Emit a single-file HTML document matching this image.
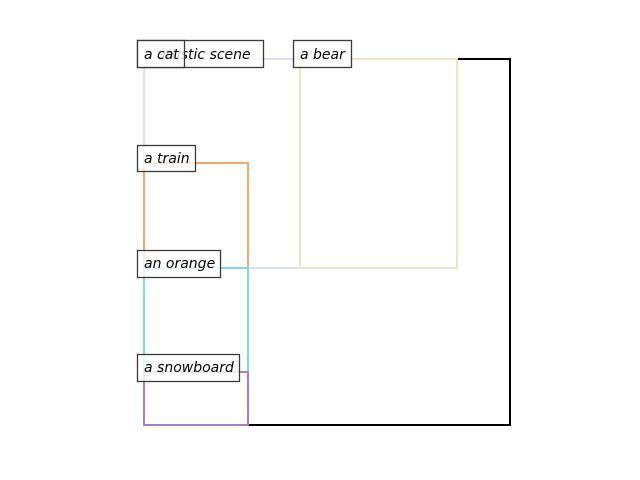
<!DOCTYPE html>
<html><head><style>
html,body{margin:0;padding:0;background:#fff;width:640px;height:480px;overflow:hidden}
svg text{font-family:"DejaVu Sans","Liberation Sans",sans-serif;font-style:italic;font-size:14px;fill:#000}
</style></head><body>
<svg width="640" height="480" xmlns="http://www.w3.org/2000/svg">
<g fill="none" stroke-width="2" shape-rendering="crispEdges">
<rect x="144" y="59" width="366" height="366" stroke="#000"/>
<rect x="144" y="59" width="156" height="209" stroke="#d8def6"/>
<rect x="300" y="59" width="157" height="209" stroke="#f2e4c2"/>
<rect x="144" y="163" width="104" height="105" stroke="#f0a868"/>
<rect x="144" y="268" width="104" height="157" stroke="#80d8f0"/>
<rect x="144" y="372" width="104" height="53" stroke="#ac7cc0"/>
</g>
<g stroke="#3a3a3a" stroke-width="1.3" fill="rgba(255,255,255,0.8)">
<rect x="137.5" y="40.5" width="126" height="27"/>
<text x="144" y="59" stroke="none">a artistic scene</text>
<rect x="137.5" y="40.5" width="47" height="27"/>
<text x="144" y="59" stroke="none">a cat</text>
<rect x="293.5" y="40.5" width="58" height="27"/>
<text x="300" y="59" stroke="none">a bear</text>
<rect x="137.5" y="145.5" width="58" height="26"/>
<text x="144" y="163" stroke="none">a train</text>
<rect x="137.5" y="250.5" width="83" height="27"/>
<text x="144" y="268" stroke="none">an orange</text>
<rect x="137.5" y="354.5" width="102" height="27"/>
<text x="144" y="372" stroke="none">a snowboard</text>
</g>
</svg>
</body></html>
